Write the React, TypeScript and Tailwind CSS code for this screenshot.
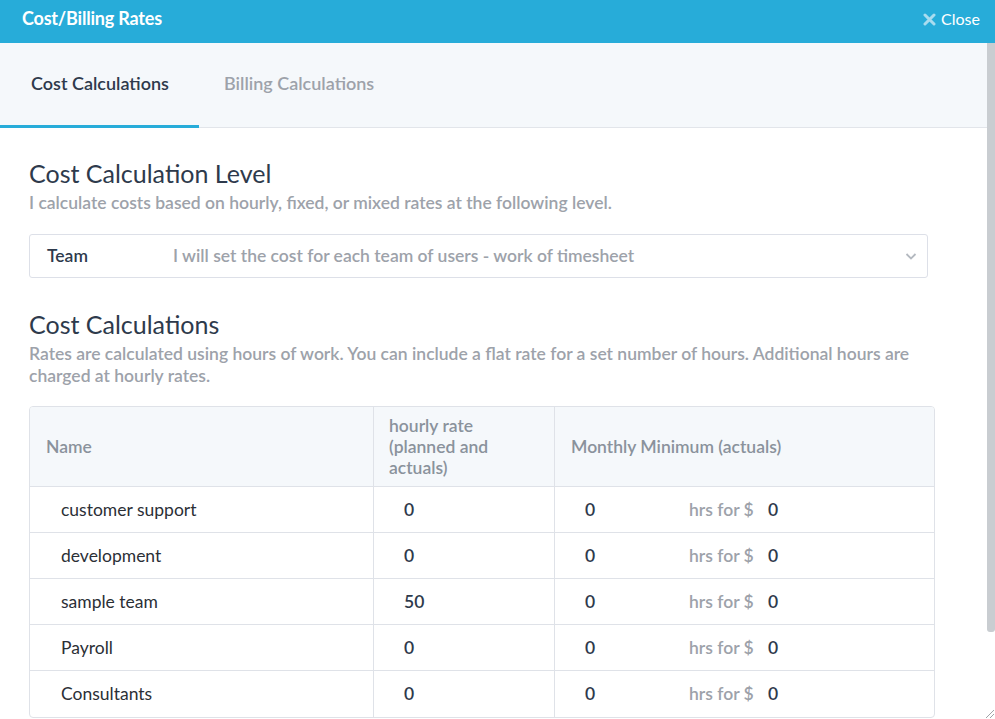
import React from "react";

const rows = [
  { name: "customer support", rate: "0", hrs: "0", amount: "0" },
  { name: "development", rate: "0", hrs: "0", amount: "0" },
  { name: "sample team", rate: "50", hrs: "0", amount: "0" },
  { name: "Payroll", rate: "0", hrs: "0", amount: "0" },
  { name: "Consultants", rate: "0", hrs: "0", amount: "0" },
];

const App: React.FC = () => {
  return (
    <div className="w-[995px] h-[719px] overflow-hidden bg-white flex flex-col font-['Lato','Open_Sans',sans-serif] relative">
      {/* header */}
      <header className="h-[43px] shrink-0 bg-[#27acd9] flex items-center justify-between pl-[22px] pr-[15px]">
        <span className="text-white text-[18px] font-bold tracking-[-0.2px] -mt-[6px]">Cost/Billing Rates</span>
        <button className="flex items-center gap-[5px] text-white text-[16px] -mt-[5px]">
          <svg width="13" height="13" viewBox="0 0 13 13" className="mt-px">
            <path d="M2 2 L11 11 M11 2 L2 11" stroke="#a9dcef" strokeWidth="3" strokeLinecap="round" />
          </svg>
          Close
        </button>
      </header>

      <div className="flex flex-1 min-h-0">
        <div className="flex-1 min-w-0">
          {/* tabs */}
          <div className="h-[85px] bg-[#f5f8fb] border-b border-[#e2e5ea] flex">
            <div className="w-[199px] flex items-center pl-[31px] pb-[2px] border-b-[3px] border-[#27acd9] -mb-px text-[18px] font-semibold text-[#2e3a4c]">
              Cost Calculations
            </div>
            <div className="flex items-center pl-[25px] pb-[3px] text-[18px] font-semibold text-[#9da2aa]">
              Billing Calculations
            </div>
          </div>

          <div className="pl-[29px] pr-[52px] pt-[30px]">
            <h2 className="text-[25px] leading-[30px] text-[#2e3a4c]">Cost Calculation Level</h2>
            <p className="text-[17.5px] font-semibold text-[#9da2aa] leading-[24px] mt-[3px]">
              I calculate costs based on hourly, fixed, or mixed rates at the following level.
            </p>

            <div className="mt-[19px] w-[899px] h-[44px] border border-[#dde0e8] rounded-[3px] flex items-center pl-[17px] pr-[9px] text-[17.5px]">
              <span className="w-[126px] font-semibold text-[#2e3a4c]">Team</span>
              <span className="flex-1 font-semibold text-[#9da2aa]">I will set the cost for each team of users - work of timesheet</span>
              <svg width="14" height="14" viewBox="0 0 14 14">
                <path d="M2.5 5 L7 9.5 L11.5 5" fill="none" stroke="#b4b9c0" strokeWidth="1.8" />
              </svg>
            </div>

            <h2 className="mt-[31px] text-[25px] leading-[30px] text-[#2e3a4c]">Cost Calculations</h2>
            <p className="text-[17.5px] font-semibold text-[#9da2aa] leading-[22px] mt-[4px] w-[900px]">
              Rates are calculated using hours of work. You can include a flat rate for a set number of hours. Additional hours are charged at hourly rates.
            </p>

            <div className="mt-[19px] w-[906px] border border-[#dfe2e8] rounded-[4px] overflow-hidden">
              <div className="grid grid-cols-[343px_181px_1fr] bg-[#f5f8fb] h-[80px] text-[17.5px] font-semibold text-[#8a929c] border-b border-[#dfe2e8]">
                <div className="flex items-center pl-[16px] pt-px">Name</div>
                <div className="flex items-center pl-[15px] leading-[21px] border-l border-[#dfe2e8]">
                  hourly rate
                  <br />
                  (planned and
                  <br />
                  actuals)
                </div>
                <div className="flex items-center pl-[16px] pt-px border-l border-[#dfe2e8]">Monthly Minimum (actuals)</div>
              </div>
              {rows.map((r, i) => (
                <div
                  key={r.name}
                  className={`grid grid-cols-[343px_181px_1fr] h-[46px] text-[17.5px] ${i < rows.length - 1 ? "border-b border-[#dfe2e8]" : ""}`}
                >
                  <div className="flex items-center pl-[31px] pt-px text-[#2b2f36]">{r.name}</div>
                  <div className="flex items-center pl-[30px] pt-px border-l border-[#dfe2e8] font-semibold text-[#2e3a4c]">{r.rate}</div>
                  <div className="flex items-center pl-[30px] pt-px border-l border-[#dfe2e8]">
                    <span className="w-[104px] font-semibold text-[#2e3a4c]">{r.hrs}</span>
                    <span className="w-[79px] font-semibold text-[#9da2aa]">hrs for $</span>
                    <span className="font-semibold text-[#2e3a4c]">{r.amount}</span>
                  </div>
                </div>
              ))}
            </div>
          </div>
        </div>

        {/* scrollbar */}
        <div className="w-[8px] shrink-0 relative">
          <div className="h-[589px] bg-[#c9cdd1] rounded-b-[3px]" />
        </div>
      </div>

      {/* resize grip */}
      <svg width="12" height="12" viewBox="0 0 12 12" className="absolute right-0 bottom-0">
        <path d="M11 3 L3 11 M11 7 L7 11" stroke="#a0a4a8" strokeWidth="1" />
      </svg>
    </div>
  );
};

export default App;
